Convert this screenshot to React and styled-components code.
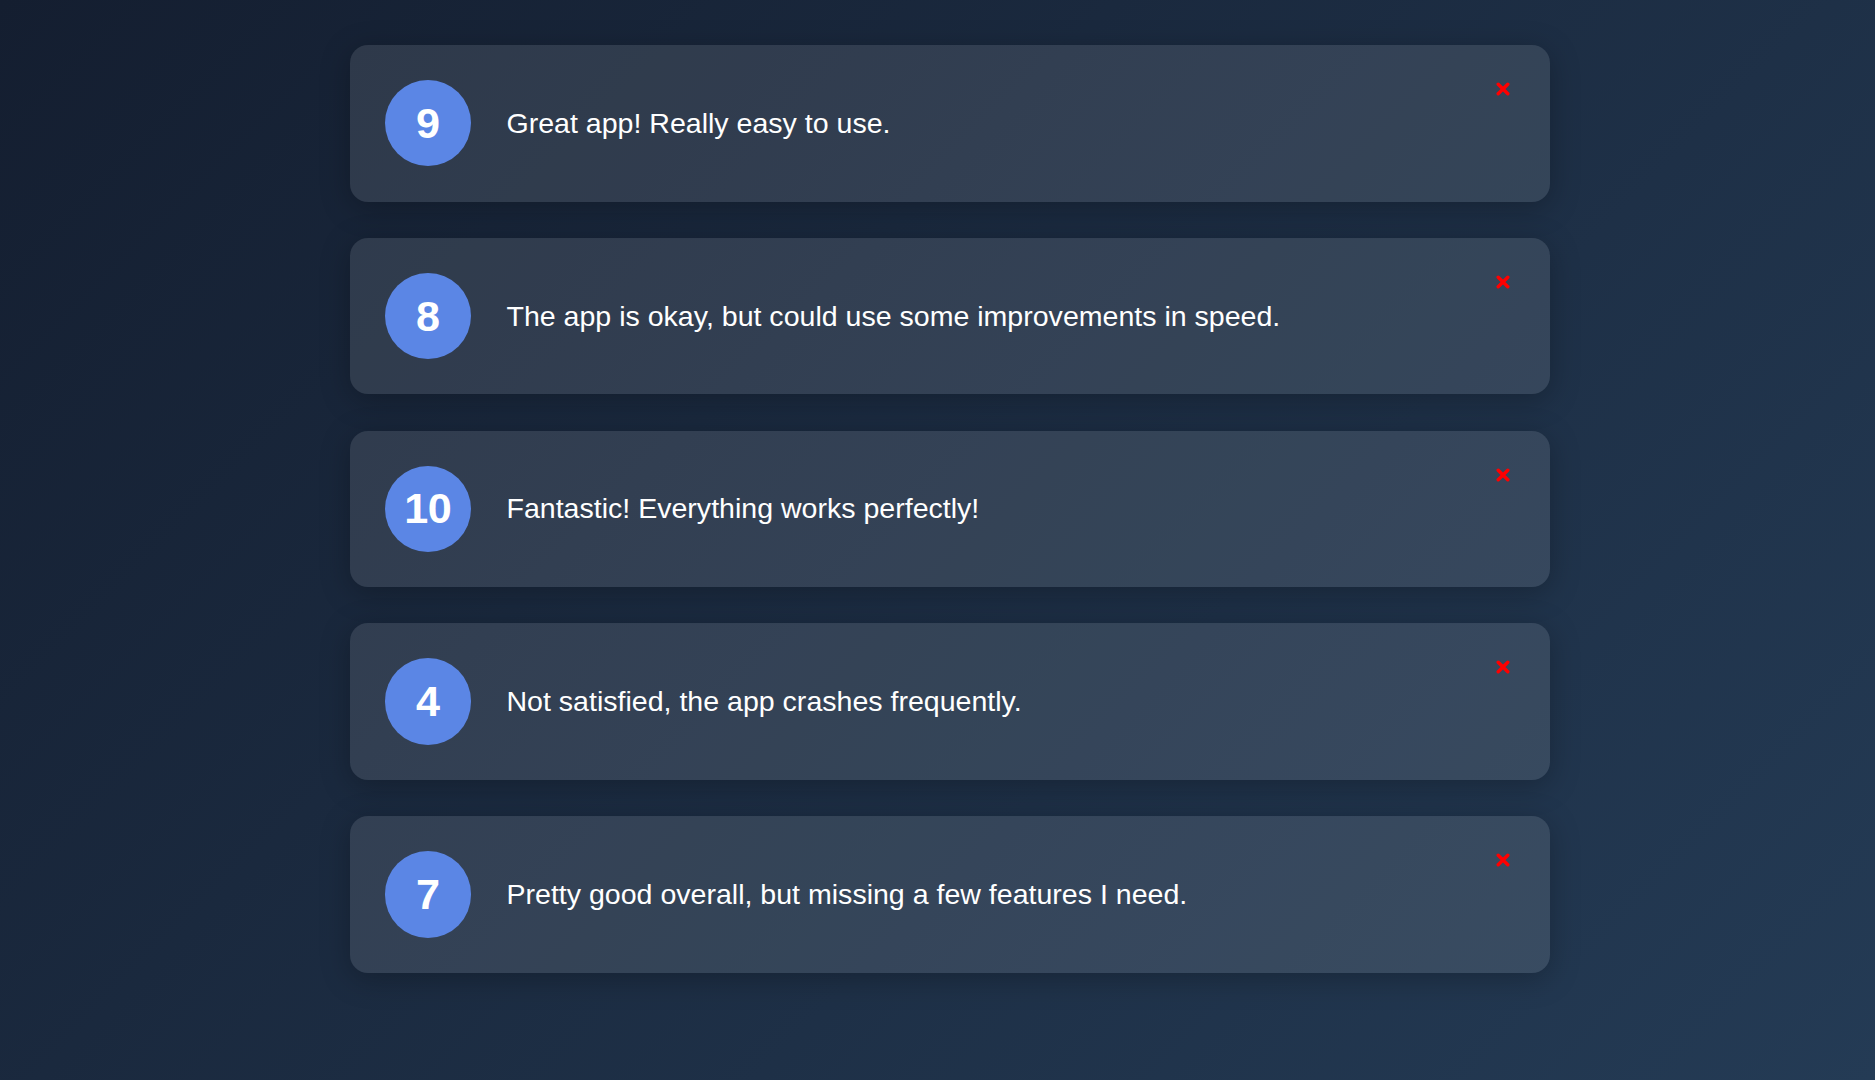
import styled, { createGlobalStyle } from 'styled-components';

const GlobalStyle = createGlobalStyle`
	html, body {
		margin: 0;
		padding: 0;
	}
	body {
		min-height: 100vh;
		background: linear-gradient(135deg, #141e30, #243b55);
		font-family: "Liberation Sans", Arial, sans-serif;
		color: #fff;
	}
`;

const feedback = [
	{ id: 1, rating: 9, text: 'Great app! Really easy to use.' },
	{ id: 2, rating: 8, text: 'The app is okay, but could use some improvements in speed.' },
	{ id: 3, rating: 10, text: 'Fantastic! Everything works perfectly!' },
	{ id: 4, rating: 4, text: 'Not satisfied, the app crashes frequently.' },
	{ id: 5, rating: 7, text: 'Pretty good overall, but missing a few features I need.' },
];

const Page = styled.div`
	min-height: 100vh;
	box-sizing: border-box;
	padding: 45px 0 40px 24px;
`;

const List = styled.div`
	width: 1200px;
	margin: 0 auto;
	display: flex;
	flex-direction: column;
	gap: 36.2px;
`;

const Card = styled.div`
	position: relative;
	display: flex;
	align-items: center;
	gap: 35.5px;
	padding: 35.1px;
	background: rgba(255, 255, 255, 0.105);
	border-radius: 18px;
	box-shadow: 0 6px 30px rgba(0, 0, 0, 0.25);
`;

const Rating = styled.div`
	flex: none;
	display: flex;
	align-items: center;
	justify-content: center;
	width: 86.4px;
	height: 86.4px;
	border-radius: 50%;
	background: #5b86e5;
	font-size: 43.2px;
	font-weight: 700;
	letter-spacing: -0.5px;
	color: #fff;
`;

const Text = styled.p`
	margin: 0;
	font-size: 28.55px;
	color: #fff;
`;

const CloseButton = styled.button`
	position: absolute;
	top: 37px;
	right: 40px;
	width: 14px;
	height: 14px;
	padding: 0;
	border: none;
	background: none;
	cursor: pointer;
	display: flex;

	& svg {
		width: 14px;
		height: 14px;
	}
`;

const CloseIcon = () => (
	<svg viewBox="0 0 14 14">
		<path d="M2.2 2.2 L11.8 11.8 M11.8 2.2 L2.2 11.8" stroke="#ff0000" strokeWidth="3.4" strokeLinecap="round" fill="none" />
	</svg>
);

const FeedbackItem = ({ rating, text }) => (
	<Card>
		<Rating>{rating}</Rating>
		<Text>{text}</Text>
		<CloseButton aria-label="delete"><CloseIcon /></CloseButton>
	</Card>
);

export default function App() {
	return (
		<>
			<GlobalStyle />
			<Page>
				<List>
					{feedback.map((item) => (
						<FeedbackItem key={item.id} rating={item.rating} text={item.text} />
					))}
				</List>
			</Page>
		</>
	);
}
